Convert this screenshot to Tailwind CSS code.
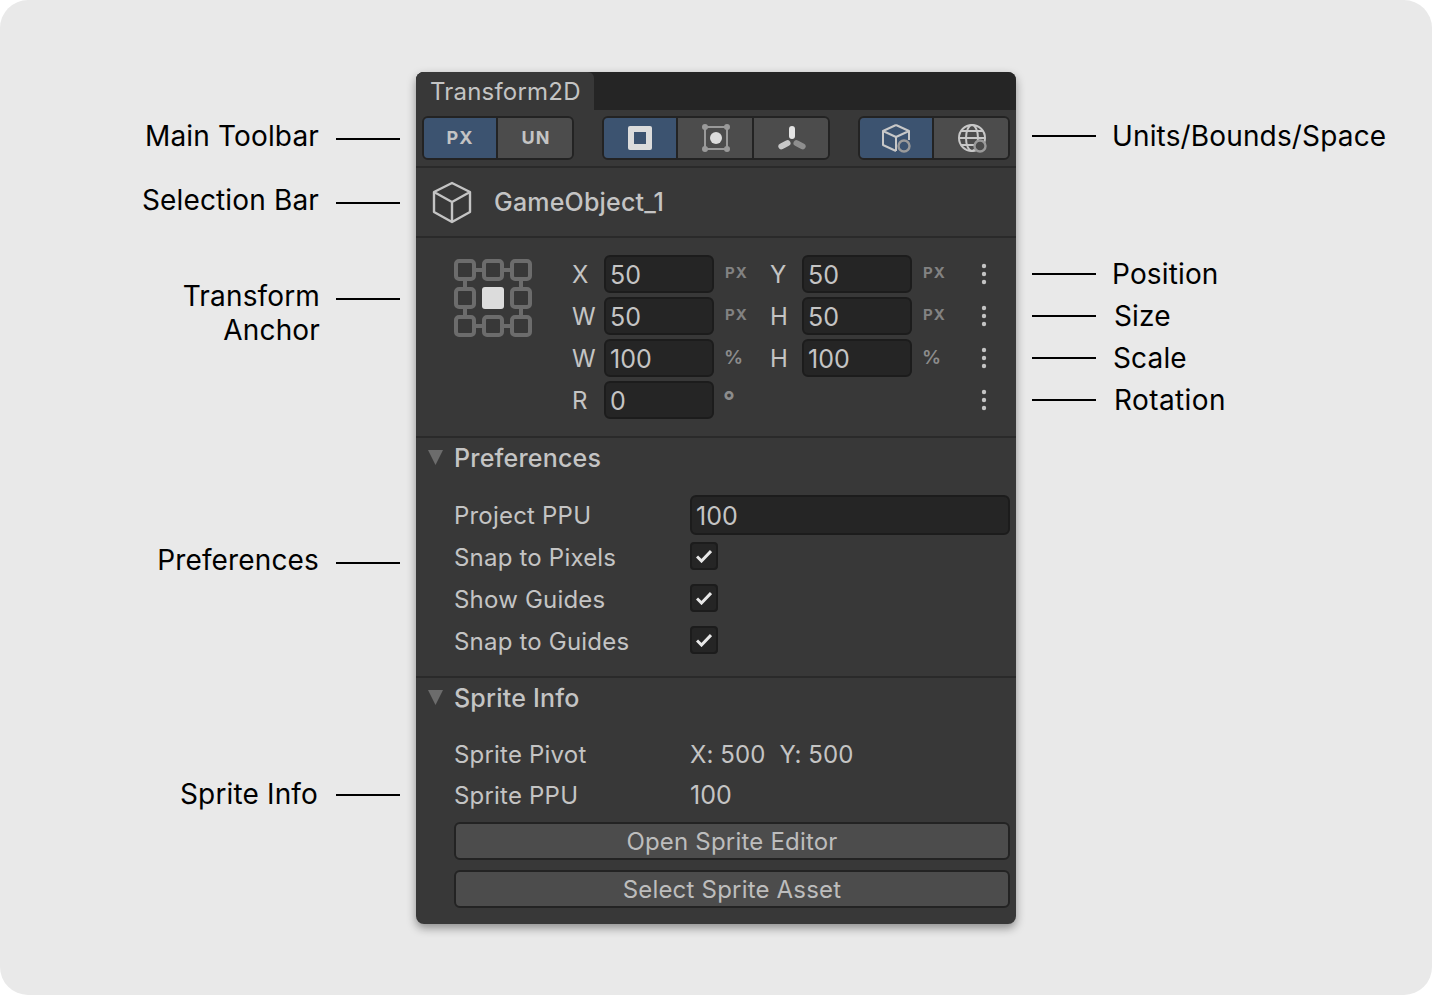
<!DOCTYPE html>
<html lang="en">
<head>
    <meta charset="UTF-8">
    <title>Transform2D</title>
    <script src="https://cdn.jsdelivr.net/npm/@tailwindcss/browser@4"></script>
</head>
<body class="bg-white font-['Inter',sans-serif] overflow-hidden">
    <div class="relative w-[1432px] h-[995px] rounded-[28px] bg-[#e9e9e9] pt-[72px] pl-[416px] text-black text-[28px] leading-[34px] tracking-[0.15px]">

        <!-- panel -->
        <div class="w-[600px] h-[852px] rounded-[8px] bg-[#383838] overflow-hidden shadow-[0_4px_10px_rgba(0,0,0,0.4)] text-[#c4c4c4] text-[24px] leading-[30px] tracking-[0.2px]">
            <div class="h-[38px] bg-[#252525] flex">
                <div class="w-[178px] h-[38px] bg-[#383838] rounded-tr-[6px] pl-[14px] pt-[5px]">Transform2D</div>
            </div>

            <!-- toolbar -->
            <div class="h-[58px] border-b-2 border-[#2a2a2a] pl-[6px] pt-[6px] flex">
                <div class="flex w-[152px] h-[44px] rounded-[6px] border-2 border-[#232323] overflow-hidden text-[18px] font-bold tracking-[1px] text-[#c4c4c4]">
                    <div class="w-[74px] bg-[#3c5370] border-r-2 border-[#232323] flex items-center justify-center">PX</div>
                    <div class="flex-1 bg-[#4c4c4c] flex items-center justify-center pl-[2px]">UN</div>
                </div>
                <div class="flex w-[228px] h-[44px] ml-[28px] rounded-[6px] border-2 border-[#232323] overflow-hidden">
                    <div class="w-[74px] bg-[#3c5370] border-r-2 border-[#232323] flex items-center justify-center">
                        <svg width="24" height="24" viewBox="0 0 24 24"><rect x="0" y="0" width="24" height="24" rx="2" fill="#dcdcdc"/><rect x="6" y="6" width="12" height="12" fill="#3c5370"/></svg>
                    </div>
                    <div class="w-[76px] bg-[#4c4c4c] border-r-2 border-[#232323] flex items-center justify-center pl-[2px]">
                        <svg width="28" height="28" viewBox="0 0 28 28" fill="#9a9a9a"><rect x="3" y="3" width="22" height="22" fill="none" stroke="#9a9a9a" stroke-width="2"/><circle cx="3" cy="3" r="3"/><circle cx="25" cy="3" r="3"/><circle cx="3" cy="25" r="3"/><circle cx="25" cy="25" r="3"/><circle cx="14" cy="14" r="6" fill="#dcdcdc"/></svg>
                    </div>
                    <div class="flex-1 bg-[#4c4c4c] flex items-center justify-center pl-[2px]">
                        <svg width="28" height="26" viewBox="0 0 28 26"><rect x="11" y="1" width="6" height="13" rx="3" fill="#e4e4e4"/><rect x="0" y="17" width="13" height="6" rx="3" transform="rotate(-28 6 20)" fill="#c8c8c8"/><rect x="15" y="17" width="13" height="6" rx="3" transform="rotate(28 22 20)" fill="#8e8e8e"/></svg>
                    </div>
                </div>
                <div class="flex w-[152px] h-[44px] ml-[28px] rounded-[6px] border-2 border-[#232323] overflow-hidden">
                    <div class="w-[74px] bg-[#3c5370] border-r-2 border-[#232323] flex items-center justify-center pl-[2px]">
                        <svg width="30" height="30" viewBox="0 0 30 30" fill="none" stroke="#c8c8c8" stroke-width="2" stroke-linejoin="round"><path d="M14 2 L27 8 V17 M14 2 L1 8 V22 L14 28 M1 8 L14 14 L27 8 M14 14 V28"/><circle cx="22" cy="23" r="5.5" stroke="#9a9a9a" stroke-width="2.4" fill="#3c5370"/></svg>
                    </div>
                    <div class="flex-1 bg-[#4c4c4c] flex items-center justify-center pl-[4px]">
                        <svg width="30" height="30" viewBox="0 0 30 30" fill="none" stroke="#c8c8c8" stroke-width="2"><circle cx="14" cy="15" r="13"/><ellipse cx="14" cy="15" rx="6" ry="13"/><path d="M1 15 H27 M3 8 H25 M3 22 H25"/><circle cx="22" cy="23" r="5.5" stroke="#9a9a9a" stroke-width="2.4" fill="#4c4c4c"/></svg>
                    </div>
                </div>
            </div>

            <!-- selection -->
            <div class="h-[70px] border-b-2 border-[#2a2a2a] flex items-center font-medium text-[25px]">
                <svg class="ml-[15px]" width="42" height="44" viewBox="0 0 42 44" fill="none" stroke="#c4c4c4" stroke-width="2.4" stroke-linejoin="round"><path d="M21 3 L39 12 V32 L21 42 L3 32 V12 Z M3 12 L21 22 L39 12 M21 22 V42"/></svg>
                <div class="ml-[21px]">GameObject_1</div>
            </div>

            <!-- transform -->
            <div class="h-[200px] border-b-2 border-[#2a2a2a] flex pt-[17px]">
                <svg class="ml-[38px] mt-[4px]" width="78" height="78" viewBox="0 0 78 78" fill="none" stroke="#6c6c6c" stroke-width="4">
                    <path d="M22 11 H28 M50 11 H56 M22 67 H28 M50 67 H56 M11 22 V28 M11 50 V56 M67 22 V28 M67 50 V56"/>
                    <rect x="2" y="2" width="18" height="18" rx="3"/><rect x="30" y="2" width="18" height="18" rx="3"/><rect x="58" y="2" width="18" height="18" rx="3"/>
                    <rect x="2" y="30" width="18" height="18" rx="3"/><rect x="58" y="30" width="18" height="18" rx="3"/>
                    <rect x="2" y="58" width="18" height="18" rx="3"/><rect x="30" y="58" width="18" height="18" rx="3"/><rect x="58" y="58" width="18" height="18" rx="3"/>
                    <rect x="28" y="28" width="22" height="22" rx="3" fill="#dcdcdc" stroke="none"/>
                </svg>
                <div class="ml-[40px] w-[425px] grid grid-cols-[32px_110px_56px_32px_110px_1fr_16px] auto-rows-[38px] gap-y-[4px] items-center">
                    <div class="translate-y-[1px]">X</div><div class="h-[38px] rounded-[6px] bg-[#252525] border-2 border-[#1c1c1c] pl-[4px] leading-[36px] text-[25px] tracking-normal">50</div><div class="pl-[11px] text-[15px] font-bold tracking-[1px] text-[#828282] -translate-y-[1px]">PX</div>
                    <div class="translate-y-[1px]">Y</div><div class="h-[38px] rounded-[6px] bg-[#252525] border-2 border-[#1c1c1c] pl-[4px] leading-[36px] text-[25px] tracking-normal">50</div><div class="pl-[11px] text-[15px] font-bold tracking-[1px] text-[#828282] -translate-y-[1px]">PX</div>
                    <svg width="6" height="22" viewBox="0 0 6 22" fill="#c4c4c4"><circle cx="3" cy="3" r="2.2"/><circle cx="3" cy="11" r="2.2"/><circle cx="3" cy="19" r="2.2"/></svg>

                    <div class="translate-y-[1px]">W</div><div class="h-[38px] rounded-[6px] bg-[#252525] border-2 border-[#1c1c1c] pl-[4px] leading-[36px] text-[25px] tracking-normal">50</div><div class="pl-[11px] text-[15px] font-bold tracking-[1px] text-[#828282] -translate-y-[1px]">PX</div>
                    <div class="translate-y-[1px]">H</div><div class="h-[38px] rounded-[6px] bg-[#252525] border-2 border-[#1c1c1c] pl-[4px] leading-[36px] text-[25px] tracking-normal">50</div><div class="pl-[11px] text-[15px] font-bold tracking-[1px] text-[#828282] -translate-y-[1px]">PX</div>
                    <svg width="6" height="22" viewBox="0 0 6 22" fill="#c4c4c4"><circle cx="3" cy="3" r="2.2"/><circle cx="3" cy="11" r="2.2"/><circle cx="3" cy="19" r="2.2"/></svg>

                    <div class="translate-y-[1px]">W</div><div class="h-[38px] rounded-[6px] bg-[#252525] border-2 border-[#1c1c1c] pl-[4px] leading-[36px] text-[25px] tracking-normal">100</div><div class="pl-[10px] text-[19px] font-semibold text-[#8c8c8c]">%</div>
                    <div class="translate-y-[1px]">H</div><div class="h-[38px] rounded-[6px] bg-[#252525] border-2 border-[#1c1c1c] pl-[4px] leading-[36px] text-[25px] tracking-normal">100</div><div class="pl-[10px] text-[19px] font-semibold text-[#8c8c8c]">%</div>
                    <svg width="6" height="22" viewBox="0 0 6 22" fill="#c4c4c4"><circle cx="3" cy="3" r="2.2"/><circle cx="3" cy="11" r="2.2"/><circle cx="3" cy="19" r="2.2"/></svg>

                    <div class="translate-y-[1px]">R</div><div class="h-[38px] rounded-[6px] bg-[#252525] border-2 border-[#1c1c1c] pl-[4px] leading-[36px] text-[25px] tracking-normal">0</div><div class="pl-[9px] text-[26px] font-bold text-[#8c8c8c] translate-y-[1px]">°</div>
                    <div></div><div></div><div></div>
                    <svg width="6" height="22" viewBox="0 0 6 22" fill="#c4c4c4"><circle cx="3" cy="3" r="2.2"/><circle cx="3" cy="11" r="2.2"/><circle cx="3" cy="19" r="2.2"/></svg>
                </div>
            </div>

            <!-- preferences -->
            <div class="h-[240px] border-b-2 border-[#2a2a2a] pl-[38px] pt-[5px]">
                <div class="flex items-center font-medium text-[25px] relative h-[30px]">
                    <svg class="absolute -ml-[26px] -mt-[1px]" width="15" height="15" viewBox="0 0 15 15"><path d="M0 0 H15 L7.5 15 Z" fill="#6c6c6c"/></svg>
                    Preferences
                </div>
                <div class="flex items-center h-[38px] mt-[23px]">
                    <div class="w-[236px] translate-y-[1px]">Project PPU</div>
                    <div class="w-[320px] h-[40px] rounded-[6px] bg-[#252525] border-2 border-[#1c1c1c] pl-[4px] leading-[38px] text-[25px] tracking-normal">100</div>
                </div>
                <div class="flex items-center h-[28px] mt-[8px]"><div class="w-[236px] translate-y-[2px]">Snap to Pixels</div>
                    <div class="w-[28px] h-[28px] rounded-[4px] bg-[#252525] border-2 border-[#1c1c1c] flex items-center justify-center"><svg width="16" height="14" viewBox="0 0 16 14" fill="none" stroke="#e8e8e8" stroke-width="3"><path d="M1 7.5 L5.5 12 L15 2"/></svg></div></div>
                <div class="flex items-center h-[28px] mt-[14px]"><div class="w-[236px] translate-y-[2px]">Show Guides</div>
                    <div class="w-[28px] h-[28px] rounded-[4px] bg-[#252525] border-2 border-[#1c1c1c] flex items-center justify-center"><svg width="16" height="14" viewBox="0 0 16 14" fill="none" stroke="#e8e8e8" stroke-width="3"><path d="M1 7.5 L5.5 12 L15 2"/></svg></div></div>
                <div class="flex items-center h-[28px] mt-[14px]"><div class="w-[236px] translate-y-[2px]">Snap to Guides</div>
                    <div class="w-[28px] h-[28px] rounded-[4px] bg-[#252525] border-2 border-[#1c1c1c] flex items-center justify-center"><svg width="16" height="14" viewBox="0 0 16 14" fill="none" stroke="#e8e8e8" stroke-width="3"><path d="M1 7.5 L5.5 12 L15 2"/></svg></div></div>
            </div>

            <!-- sprite info -->
            <div class="pl-[38px] pt-[5px]">
                <div class="flex items-center font-medium text-[25px] relative h-[30px]">
                    <svg class="absolute -ml-[26px] -mt-[1px]" width="15" height="15" viewBox="0 0 15 15"><path d="M0 0 H15 L7.5 15 Z" fill="#6c6c6c"/></svg>
                    Sprite Info
                </div>
                <div class="flex h-[30px] mt-[27px] items-center"><div class="w-[236px]">Sprite Pivot</div><div class="flex gap-[14px] tracking-[0.1px]"><span>X: 500</span><span>Y: 500</span></div></div>
                <div class="flex h-[30px] mt-[10px] items-center"><div class="w-[236px] translate-y-[1px]">Sprite PPU</div><div class="text-[25px] tracking-normal">100</div></div>
                <div class="w-[556px] h-[38px] mt-[12px] rounded-[6px] bg-[#4c4c4c] border-2 border-[#232323] flex items-center justify-center pt-[1px] text-[#bdbdbd]">Open Sprite Editor</div>
                <div class="w-[556px] h-[38px] mt-[10px] rounded-[6px] bg-[#4c4c4c] border-2 border-[#232323] flex items-center justify-center pt-[1px] text-[#bdbdbd]">Select Sprite Asset</div>
            </div>
        </div>

        <!-- callouts left -->
        <div class="absolute right-[1113px] top-[119px]">Main Toolbar</div>
        <div class="absolute left-[336px] top-[138px] w-[64px] h-[2px] bg-black"></div>
        <div class="absolute right-[1113px] top-[183px]">Selection Bar</div>
        <div class="absolute left-[336px] top-[202px] w-[64px] h-[2px] bg-black"></div>
        <div class="absolute right-[1112px] top-[279px] text-right">Transform<br>Anchor</div>
        <div class="absolute left-[336px] top-[298px] w-[64px] h-[2px] bg-black"></div>
        <div class="absolute right-[1113px] top-[543px]">Preferences</div>
        <div class="absolute left-[336px] top-[562px] w-[64px] h-[2px] bg-black"></div>
        <div class="absolute right-[1114px] top-[777px]">Sprite Info</div>
        <div class="absolute left-[336px] top-[794px] w-[64px] h-[2px] bg-black"></div>

        <!-- callouts right -->
        <div class="absolute left-[1032px] top-[135px] w-[64px] h-[2px] bg-black"></div>
        <div class="absolute left-[1112px] top-[119px]">Units/Bounds/Space</div>
        <div class="absolute left-[1032px] top-[273px] w-[64px] h-[2px] bg-black"></div>
        <div class="absolute left-[1112px] top-[257px]">Position</div>
        <div class="absolute left-[1032px] top-[315px] w-[64px] h-[2px] bg-black"></div>
        <div class="absolute left-[1114px] top-[299px]">Size</div>
        <div class="absolute left-[1032px] top-[357px] w-[64px] h-[2px] bg-black"></div>
        <div class="absolute left-[1113px] top-[341px]">Scale</div>
        <div class="absolute left-[1032px] top-[399px] w-[64px] h-[2px] bg-black"></div>
        <div class="absolute left-[1114px] top-[383px] tracking-[0.4px]">Rotation</div>
    </div>
</body>
</html>
